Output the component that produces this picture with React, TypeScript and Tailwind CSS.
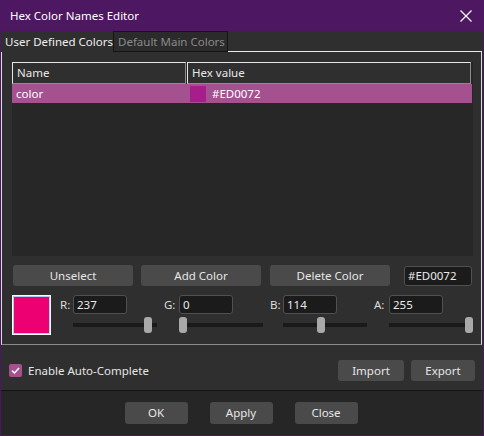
import React from "react";

const font = { fontFamily: '"Noto Sans", "Open Sans", sans-serif' };

function Btn({ label, w }: { label: string; w: string }) {
  return (
    <div className={`${w} h-[21px] bg-[#4a4a4a] rounded-[3px] flex items-center justify-center text-[11.5px] text-[#e6e6e6] whitespace-nowrap`}>
      {label}
    </div>
  );
}

function Channel({ label, value, lw }: { label: string; value: number; lw: string }) {
  const left = Math.round((value / 255) * 76);
  return (
    <div className="flex">
      <div className={`${lw} h-[19px] flex items-center text-[11.5px] text-[#dcdcdc]`}>{label}</div>
      <div className="flex flex-col w-[84px]">
        <div className="w-[54px] h-[19px] bg-[#1b1b1b] border border-[#505050] rounded-[3px] flex items-center pl-[3px] text-[11.5px] text-[#eaeaea]">
          {value}
        </div>
        <div className="relative h-[16px] mt-[3px]">
          <div className="absolute left-0 right-0 top-[6px] h-[4px] bg-[#1a1a1a]" />
          <div className="absolute top-0 w-[8px] h-[16px] rounded-[3px] bg-[#a9a9a9]" style={{ left }} />
        </div>
      </div>
    </div>
  );
}

export default function App() {
  return (
    <div className="w-[484px] h-[436px] bg-[#4d1761] flex flex-col px-[1px] pb-[1px] select-none whitespace-nowrap" style={font}>
      <div className="h-[31px] flex items-center justify-between pl-[9px] pr-[11px]">
        <span className="text-[11.5px] text-white">Hex Color Names Editor</span>
        <svg width="12" height="12" viewBox="0 0 12 12">
          <path d="M0.5 0.5 L11.5 11.5 M11.5 0.5 L0.5 11.5" stroke="#ffffff" strokeWidth="1.2" />
        </svg>
      </div>
      <div className="flex-1 bg-[#2f2f2f] flex flex-col">
        <div className="h-[21px] flex items-stretch">
          <div className="w-[112px] flex items-center pl-[4px] text-[11.5px] text-[#f0f0f0]">User Defined Colors</div>
          <div className="w-[115px] border border-[#141414] bg-[#2b2b2b] flex items-center pl-[4px] text-[11.5px] text-[#8a8a8a]">
            Default Main Colors
          </div>
          <div className="flex-1 border-b border-[#e8e8e8] mr-[1px]" />
        </div>
        <div className="mr-[1px] h-[293px] border-l border-r border-b border-[#dcdcdc] border-b-[#8a8a8a] flex flex-col pl-[10px] pr-[8px] pt-[10px]">
          <div className="h-[194px] bg-[#272727] flex flex-col">
            <div className="flex h-[22px] gap-[1px]">
              <div className="w-[174px] border border-[#e6e6e6] border-r-[#8c8c8c] border-b-[#8c8c8c] bg-[#2f2f2f] flex items-center pl-[4px] text-[11.5px] text-[#e8e8e8]">
                Name
              </div>
              <div className="w-[284px] border border-[#e6e6e6] border-r-[#8c8c8c] border-b-[#8c8c8c] bg-[#2f2f2f] flex items-center pl-[4px] text-[11.5px] text-[#e8e8e8]">
                Hex value
              </div>
            </div>
            <div className="flex h-[19px] bg-[#a5518f] w-[460px] text-[11.5px] text-white">
              <div className="w-[176px] flex items-center pl-[4px]">color</div>
              <div className="flex items-center pl-[2px] gap-[6px]">
                <div className="w-[16px] h-[16px] bg-[#a51e8c]" />
                <span>#ED0072</span>
              </div>
            </div>
          </div>
          <div className="flex mt-[9px] items-center">
            <div className="ml-[1px] flex gap-[8px]">
              <Btn label="Unselect" w="w-[120px]" />
              <Btn label="Add Color" w="w-[120px]" />
            </div>
            <div className="ml-[9px]">
              <Btn label="Delete Color" w="w-[120px]" />
            </div>
            <div className="ml-[14px] w-[68px] h-[20px] bg-[#1b1b1b] border border-[#505050] rounded-[3px] flex items-center pl-[3px] text-[11.5px] text-[#eaeaea]">
              #ED0072
            </div>
          </div>
          <div className="flex mt-[8px]">
            <div className="w-[40px] h-[40px] border border-white p-[1px] bg-[#b4ccf2] mt-[1px]">
              <div className="w-full h-full bg-[#ED0072]" />
            </div>
            <div className="flex ml-[9px] gap-[7px] mt-[1px]">
              <Channel label="R:" value={237} lw="w-[13px]" />
              <Channel label="G:" value={0} lw="w-[15px]" />
              <Channel label="B:" value={114} lw="w-[13px]" />
              <Channel label="A:" value={255} lw="w-[15px]" />
            </div>
          </div>
        </div>
        <div className="h-[45px] flex items-center pl-[8px] pr-[8px] pt-[6px]">
          <div className="w-[13px] h-[13px] rounded-[2px] bg-[#a5518f] flex items-center justify-center">
            <svg width="9" height="9" viewBox="0 0 9 9">
              <path d="M1 4.6 L3.5 7 L8 2" stroke="#ffffff" strokeWidth="1.5" fill="none" />
            </svg>
          </div>
          <span className="ml-[6px] text-[11.5px] text-[#e6e6e6]">Enable Auto-Complete</span>
          <div className="flex-1" />
          <div className="flex gap-[7px]">
            <Btn label="Import" w="w-[66px]" />
            <Btn label="Export" w="w-[64px]" />
          </div>
        </div>
        <div className="h-[1px] bg-[#141414]" />
        <div className="flex-1 bg-[#262626] flex justify-center items-start pt-[11px] pr-[2px]">
          <div className="flex gap-[22px]">
            <div className="h-[22px] w-[63px] bg-[#4a4a4a] rounded-[3px] flex items-center justify-center text-[11.5px] text-[#e6e6e6]">OK</div>
            <div className="h-[22px] w-[63px] bg-[#4a4a4a] rounded-[3px] flex items-center justify-center text-[11.5px] text-[#e6e6e6]">Apply</div>
            <div className="h-[22px] w-[63px] bg-[#4a4a4a] rounded-[3px] flex items-center justify-center text-[11.5px] text-[#e6e6e6]">Close</div>
          </div>
        </div>
      </div>
    </div>
  );
}
